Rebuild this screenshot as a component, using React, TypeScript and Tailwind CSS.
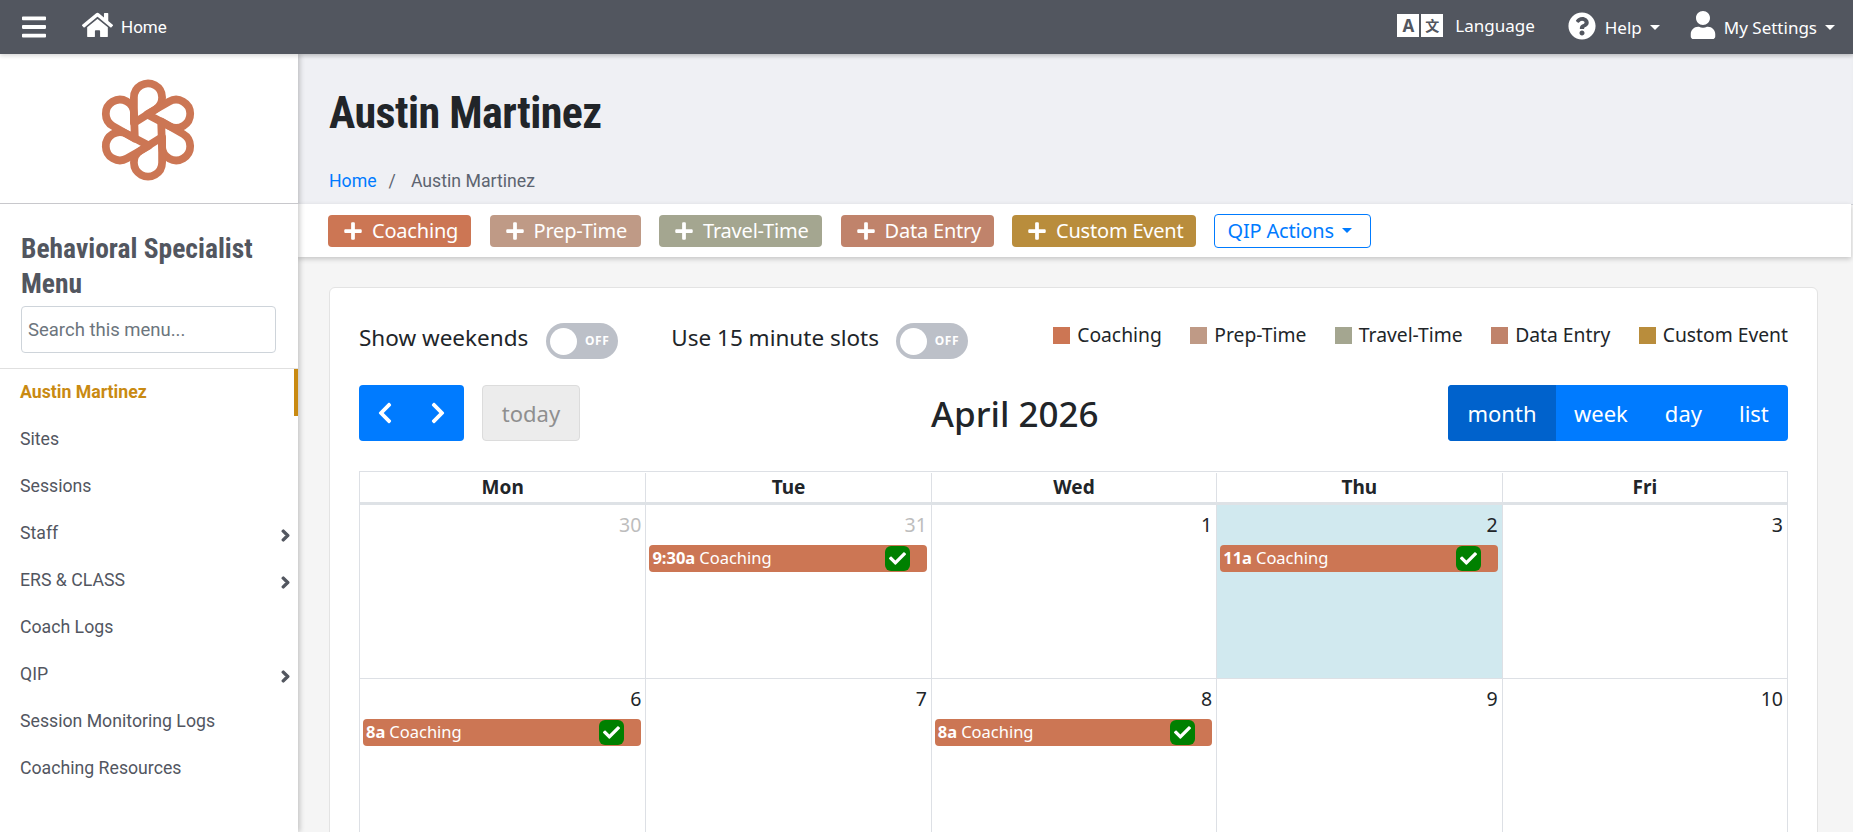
import { FaBars, FaHome, FaQuestionCircle, FaUser, FaPlus, FaChevronRight, FaChevronLeft, FaCheck } from "react-icons/fa";

const menu = [
	{ name: "Austin Martinez", active: true },
	{ name: "Sites" },
	{ name: "Sessions" },
	{ name: "Staff", more: true },
	{ name: "ERS & CLASS", more: true },
	{ name: "Coach Logs" },
	{ name: "QIP", more: true },
	{ name: "Session Monitoring Logs" },
	{ name: "Coaching Resources" },
];

const actions = [
	{ name: "Coaching", color: "bg-[#cc7654]", width: "w-[143px]" },
	{ name: "Prep-Time", color: "bg-[#bf9a86]", width: "w-[151px]" },
	{ name: "Travel-Time", color: "bg-[#a4a690]", width: "w-[163px]" },
	{ name: "Data Entry", color: "bg-[#c0836b]", width: "w-[153px]" },
	{ name: "Custom Event", color: "bg-[#b98d3c]", width: "w-[184px]" },
];

const weeks = [
	[
		{ day: 30, muted: true },
		{ day: 31, muted: true, time: "9:30a" },
		{ day: 1 },
		{ day: 2, today: true, time: "11a" },
		{ day: 3 },
	],
	[{ day: 6, time: "8a" }, { day: 7 }, { day: 8, time: "8a" }, { day: 9 }, { day: 10 }],
];

function Caret() {
	return <span className="ml-2 inline-block border-x-[5px] border-t-[5px] border-x-transparent border-t-current align-middle" />;
}

function Logo() {
	return (
		<svg width="106" height="110" viewBox="-150 -156 300 312" fill="none" stroke="#cc7654" strokeWidth="22" strokeLinejoin="round" className="mr-[2px]">
			{[0, 60, 120, 180, 240, 300].map((deg) => (
				<path key={deg} transform={`rotate(${deg})`} d="M-40 -92 A40 40 0 1 1 21 -58 L-40 -20 Z" />
			))}
		</svg>
	);
}

function Toggle() {
	return (
		<span className="relative flex h-9 w-[72px] items-center justify-end rounded-full bg-[#bcc0c8] pr-[9px] text-[12px] font-bold tracking-[0.5px] text-white">
			OFF
			<span className="absolute top-[4.5px] left-[4px] h-[27px] w-[27px] rounded-full bg-white" />
		</span>
	);
}

export default function App() {
	return (
		<div className="flex h-[832px] flex-col overflow-hidden bg-[#f5f5f5] font-['Roboto',sans-serif] text-[#212529]">
			{/* Top bar */}
			<header className="z-20 flex h-[54px] shrink-0 items-center bg-[#52565f] text-white shadow-[0_2px_4px_rgba(0,0,0,0.15)]">
				<FaBars className="ml-[22px] h-[28px] w-[24px]" />
				<FaHome className="mb-[4px] ml-[36px] h-[28px] w-[31px]" />
				<span className="mt-[2px] ml-[8px] text-[17px]">Home</span>
				<div className="ml-auto flex items-center pr-[18px] font-['Noto_Sans',sans-serif]">
					{/* translate badge */}
					<span className="mb-[3px] flex h-[23px] w-[46px] gap-[2px] text-[17px] leading-[23px] font-bold text-[#52565f]">
						<span className="flex-1 bg-white text-center">A</span>
						<span className="flex-1 bg-white text-center font-['Noto_Sans_CJK_SC',sans-serif] text-[14px]">文</span>
					</span>
					<span className="mb-[2px] ml-[12px] text-[17px]">Language</span>
					<FaQuestionCircle className="mb-[3px] ml-[33px] h-[28px] w-[28px]" />
					<span className="mt-[2px] ml-[9px] text-[17px]">Help</span>
					<Caret />
					<FaUser className="mb-[4px] ml-[30px] h-[28px] w-[26px]" />
					<span className="mt-[2px] ml-[8px] text-[17px]">My Settings</span>
					<Caret />
				</div>
			</header>

			<div className="flex min-h-0 flex-1">
				{/* Sidebar */}
				<aside className="z-10 w-[298px] shrink-0 bg-white shadow-[2px_0_5px_rgba(0,0,0,0.2)]">
					<div className="flex h-[150px] items-center justify-center border-b border-[#c8c8cc] pt-[3px]">
						<Logo />
					</div>
					<div className="px-[21px] pt-[28px]">
						<h2 className="text-[27.5px] leading-[34.5px] font-bold font-stretch-[85%] text-[#52565f]">Behavioral Specialist Menu</h2>
						<input
							readOnly
							placeholder="Search this menu..."
							className="mt-[5px] h-[47px] w-[255px] rounded border border-[#ced4da] px-[6px] text-[18.5px] text-[#52565f] outline-none placeholder:text-[#6c757d]"
						/>
					</div>
					<nav className="mt-[15px] border-t border-[#e0e0e0]">
						{menu.map((item) => (
							<div
								key={item.name}
								className={`flex h-[47px] items-center pr-[8px] pl-[20px] text-[17.7px] ${
									item.active ? "border-r-4 border-[#c98a12] font-bold font-stretch-[90%] text-[#c98a12]" : "text-[#52565f]"
								}`}>
								{item.name}
								{item.more && <FaChevronRight className="mt-[4px] ml-auto h-[13px] w-[9px]" stroke="currentColor" strokeWidth={50} />}
							</div>
						))}
					</nav>
				</aside>

				{/* Main */}
				<main className="min-w-0 flex-1">
					<div className="h-[151px] border-b border-[#d0d2d8] bg-[#eff0f4] pt-[31px] pl-[31px] shadow-[inset_0_4px_4px_-2px_rgba(0,0,0,0.08)]">
						<h1 className="text-[44px] leading-[56px] font-bold font-stretch-[82%] tracking-[-0.55px] text-[#212529]">Austin Martinez</h1>
						<div className="mt-[27px] flex items-center text-[17.7px] text-[#5d6470]">
							<span className="text-[#007bff]">Home</span>
							<span className="ml-[12px]">/</span>
							<span className="ml-[15px]">Austin Martinez</span>
						</div>
					</div>

					<div className="mr-[2px] -mt-px flex h-[53px] items-center gap-[18.5px] bg-white pl-[30px] font-['Noto_Sans',sans-serif] shadow-[0_2px_5px_rgba(0,0,0,0.2)]">
						{actions.map((a) => (
							<button key={a.name} className={`flex h-[32px] items-center rounded-[4px] pt-[1px] pl-[15px] text-[20px] tracking-[-0.2px] text-white ${a.color} ${a.width}`}>
								<FaPlus className="mr-[9px] h-[20px] w-[20px]" />
								{a.name}
							</button>
						))}
						<button className="-ml-px flex h-[34px] w-[157px] items-center rounded-[4px] border border-[#007bff] pl-[13px] text-[20px] tracking-[-0.2px] text-[#007bff]">
							QIP Actions
							<Caret />
						</button>
					</div>

					<div className="mt-[30px] ml-[31px] w-[1489px] rounded-t-[6px] border border-[#e3e3e3] bg-white px-[29px] pt-[35px] font-['Noto_Sans',sans-serif]">
						<div className="flex h-[36px] items-center text-[22.5px]">
							<span className="mb-[6px]">Show weekends</span>
							<span className="ml-[18px]"><Toggle /></span>
							<span className="mb-[6px] ml-[53px]">Use 15 minute slots</span>
							<span className="ml-[17px]"><Toggle /></span>
							<div className="mb-[11px] ml-auto flex items-center text-[19.3px]">
								{actions.map((a, i) => (
									<span key={a.name} className={`flex items-center ${i > 0 ? "ml-[28.5px]" : ""}`}>
										<span className={`mr-[7px] h-[17px] w-[17px] ${a.color}`} />
										{a.name}
									</span>
								))}
							</div>
						</div>

						<div className="mt-[26px] flex h-[56px] items-center justify-between">
							<div className="flex items-center">
								<div className="flex h-[56px] w-[105px] items-center justify-between rounded-[4px] bg-[#007bff] px-[18px] text-white">
									<FaChevronLeft className="h-[24px] w-[16px]" />
									<FaChevronRight className="h-[24px] w-[16px]" />
								</div>
								<div className="ml-[18px] flex h-[56px] w-[98px] items-center justify-center rounded-[4px] border border-[#dcdcdc] bg-[#ececec] text-[22px] text-[#8f8f8f]">
									today
								</div>
							</div>
							<h2 className="absolute left-[931px] text-[35px] leading-none font-medium">April 2026</h2>
							<div className="flex h-[56px] w-[340px] items-center overflow-hidden rounded-[4px] bg-[#007bff] text-[22px] text-white">
								<span className="flex h-full w-[108px] items-center justify-center bg-[#0062cc]">month</span>
								<span className="ml-[18px]">week</span>
								<span className="ml-[37px]">day</span>
								<span className="ml-[37px]">list</span>
							</div>
						</div>

						<div className="mt-[30px] border-x border-t border-[#dde0e5]">
							<div className="grid h-[33px] grid-cols-5 border-b-[3px] border-[#dee2e6] pt-[1px] text-[19px] font-bold">
								{["Mon", "Tue", "Wed", "Thu", "Fri"].map((d, i) => (
									<div key={d} className={`flex items-center justify-center ${i > 0 ? "border-l border-[#dde0e5]" : ""}`}>
										{d}
									</div>
								))}
							</div>
							{weeks.map((week, w) => (
								<div key={w} className="grid h-[174px] grid-cols-5 border-b border-[#dde0e5]">
									{week.map((cell, i) => (
										<div
											key={cell.day}
											className={`flex flex-col pt-[7px] pr-[4px] pl-[3px] ${i > 0 ? "border-l border-[#dde0e5]" : ""} ${cell.today ? "bg-[#d1e9ef]" : ""}`}>
											<div className={`text-right text-[19.5px] leading-[26px] ${cell.muted ? "text-[#bdbdbd]" : "text-[#212529]"}`}>{cell.day}</div>
											{cell.time && (
												<div className="mt-[7px] flex h-[27px] items-center rounded-[4px] bg-[#cc7654] pl-[3px] text-[16.5px] text-white">
													<b>{cell.time}</b>
													<span className="ml-[4px]">Coaching</span>
													<span className="mr-[17px] ml-auto flex h-[25px] w-[25px] items-center justify-center rounded-[6px] bg-[#008000]">
														<FaCheck className="h-[17px] w-[17px]" />
													</span>
												</div>
											)}
										</div>
									))}
								</div>
							))}
						</div>
					</div>
				</main>
			</div>
		</div>
	);
}
